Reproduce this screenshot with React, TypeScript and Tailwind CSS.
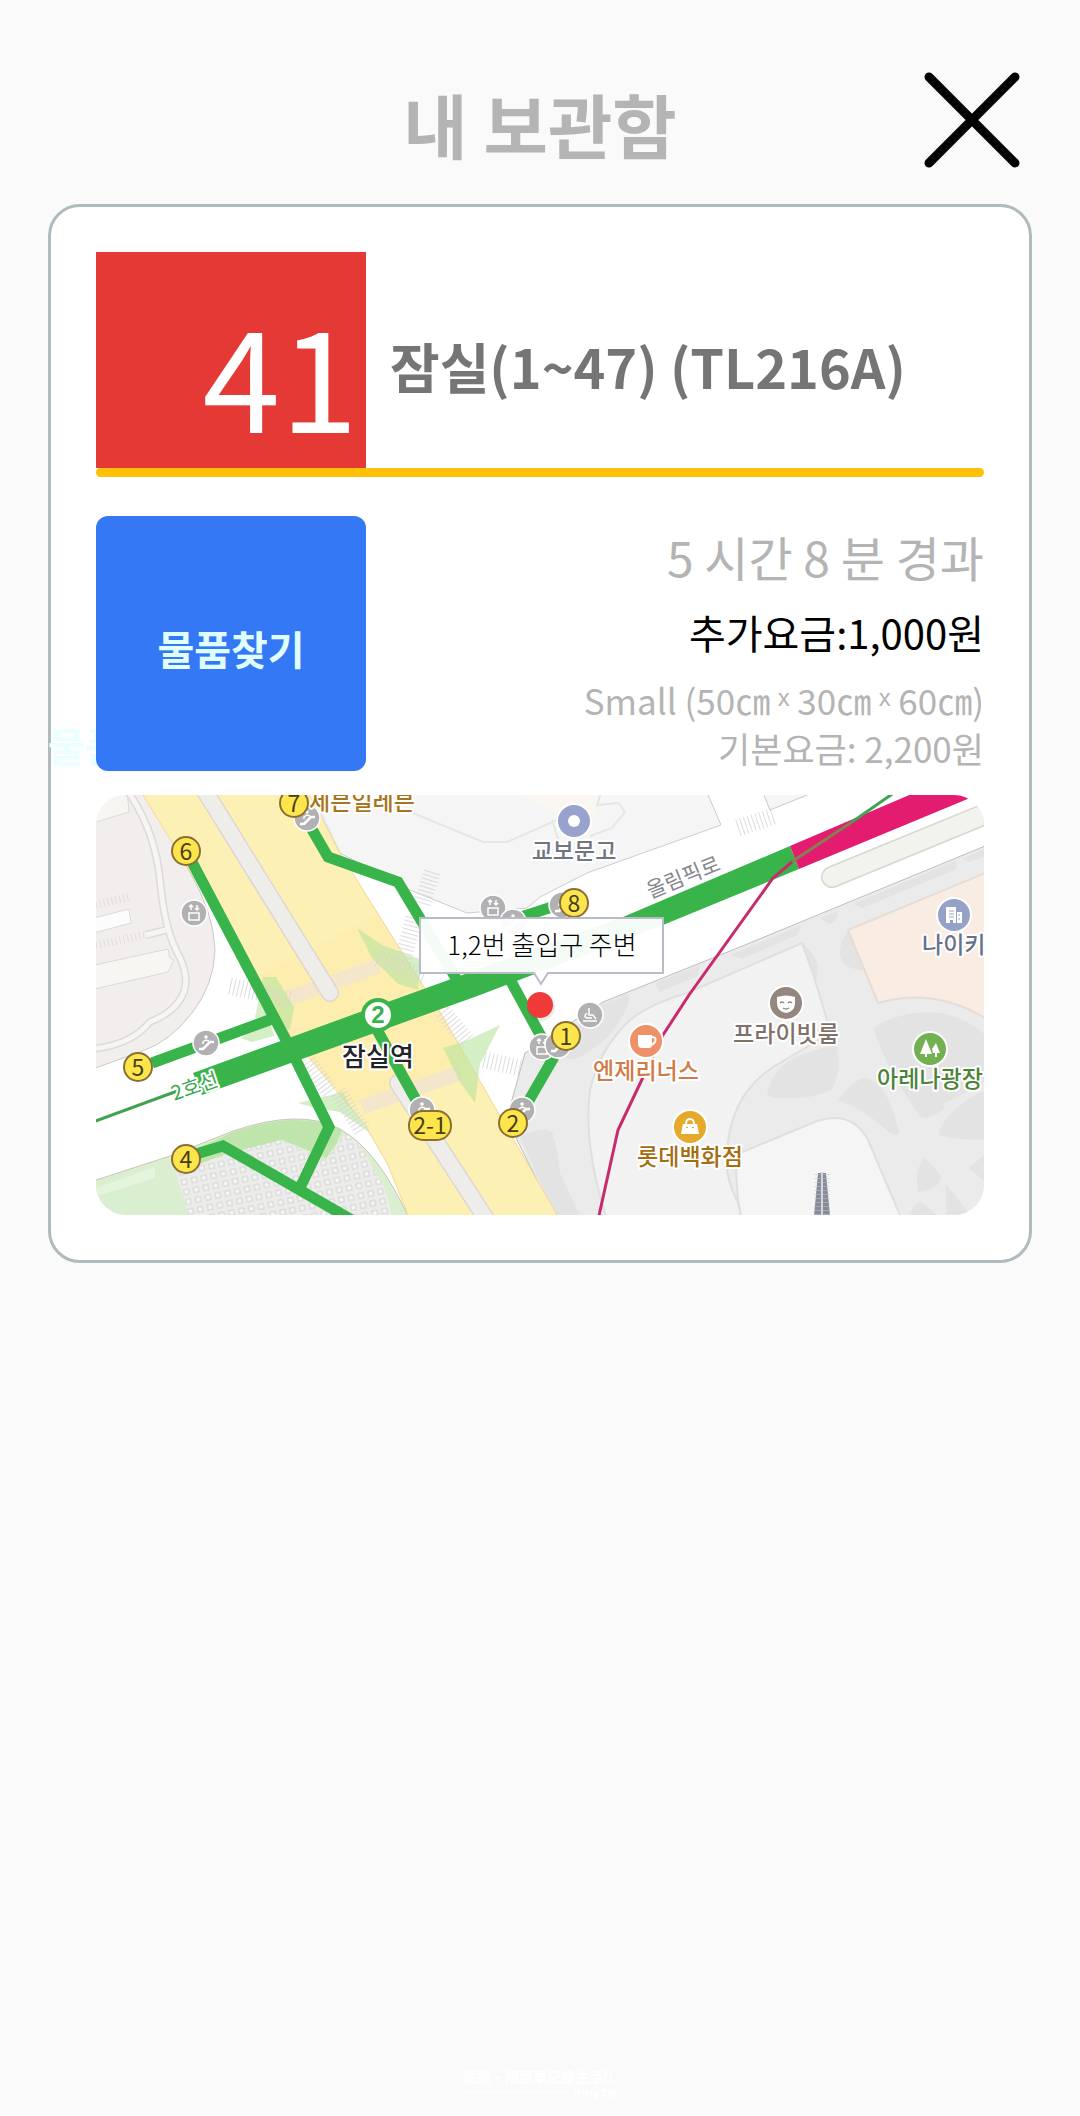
import type { ReactNode } from "react";

type Point = { x: number; y: number };

const exits: (Point & { label: string })[] = [
  { label: "7", x: 294, y: 803 },
  { label: "6", x: 186, y: 851 },
  { label: "5", x: 138, y: 1067 },
  { label: "4", x: 186, y: 1159 },
  { label: "8", x: 574, y: 903 },
  { label: "1", x: 566, y: 1036 },
  { label: "2", x: 513, y: 1123 },
];

const elevators: Point[] = [
  { x: 194, y: 913 },
  { x: 493, y: 908 },
  { x: 542, y: 1047 },
];

const escalators: Point[] = [
  { x: 206, y: 1043 },
  { x: 307, y: 818 },
  { x: 513, y: 922 },
  { x: 562, y: 905 },
  { x: 558, y: 1045 },
  { x: 422, y: 1110 },
  { x: 522, y: 1110 },
];

const crosswalks = [
  "M432 872 L422 905",
  "M414 918 L402 962",
  "M378 958 L424 976",
  "M230 986 L292 1000",
  "M443 1012 L468 1042",
  "M484 1060 L520 1068",
  "M308 1062 L330 1092",
  "M338 1092 L362 1130",
  "M738 828 L774 816",
];

function CloseIcon() {
  return (
    <svg viewBox="0 0 96 96" className="size-24" aria-hidden="true">
      <path
        d="M5 5 L91 91 M91 5 L5 91"
        stroke="black"
        strokeWidth="9"
        strokeLinecap="round"
      />
    </svg>
  );
}

function Place({
  x,
  y,
  color,
  children,
}: Point & { color: string; children: ReactNode }) {
  return (
    <g transform={`translate(${x} ${y})`}>
      <circle r="17" fill={color} stroke="white" strokeWidth="2" />
      {children}
    </g>
  );
}

function Terrain() {
  return (
    <g>
      {/* west block */}
      <g stroke="#dcd8d6">
        <path
          d="M90 790 H143 L187 867 Q214 912 215 950 Q214 985 192 1013 Q170 1042 140 1052 L90 1070 Z"
          fill="#f1eeed"
          stroke="#cbc7c5"
        />
        <path d="M90 790 H127 L129 812 L90 824 Z" fill="#f7f5f2" />
        <path d="M90 919 L129 909 L131 923 L90 934 Z" fill="#fcfcfc" />
        <path
          d="M90 966 L168 949 L170 958 L174 960 L168 972 L90 990 Z"
          fill="#f8f6f3"
        />
      </g>
      <path
        d="M127 790 Q155 830 160 880 Q164 925 176 950 Q190 975 184 992 Q176 1012 150 1022 Q130 1046 90 1049 M146 935 L170 929"
        fill="none"
        stroke="#dddad7"
        strokeWidth="8"
      />
      <path
        d="M127 790 Q155 830 160 880 Q164 925 176 950 Q190 975 184 992 Q176 1012 150 1022 Q130 1046 90 1049 M146 935 L170 929"
        fill="none"
        stroke="#f6f5f3"
        strokeWidth="5"
      />
      <path
        d="M96 905 L131 896 M96 945 L146 935"
        stroke="#e0dcda"
        strokeWidth="8"
        strokeDasharray="1 3"
      />

      {/* north blocks */}
      <path
        d="M310 790 L340 853 L410 890 L467 913 L527 908 L540 897 L587 873 L721 825 L706 790 Z"
        fill="#f6f6f6"
        stroke="#cccccc"
      />
      <path
        d="M518 795 H602 L592 815 L562 818 L540 804 Z"
        fill="#f9f7f0"
      />
      <path
        d="M310 790 L340 853 M413 813 L483 842 H507 L557 820 M552 820 L560 845 M602 790 L597 805 L619 803 L625 812 L612 828 L590 836"
        fill="none"
        stroke="#e6e6e6"
        strokeWidth="2"
      />
      <path d="M762 790 L770 810 L812 793 Z" fill="#f6f6f6" stroke="#c8c8c8" />
      <path
        d="M832 877 L1000 808"
        stroke="#d6d6d1"
        strokeWidth="22"
        strokeLinecap="round"
      />
      <path
        d="M832 877 L1000 808"
        stroke="#f3f3ee"
        strokeWidth="19"
        strokeLinecap="round"
      />

      {/* south-east block */}
      <path
        d="M990 844 L740 947 L603 1002 L560 1030 L525 1053 L510 1107 L517 1140 L557 1220 H990 Z"
        fill="#ebebec"
        stroke="#bdbdbd"
      />
      <g fill="#e3e3e4">
        <path d="M564 1048 Q562 1064 580 1057 Q608 1042 622 1017 Q632 1000 628 994 L603 1004 L574 1028 Z" />
        <path d="M520 1137 Q540 1126 551 1131 Q557 1140 560 1173 L582 1220 H557 Z" />
        <path d="M853 904 L955 861 Q960 870 950 872 L862 908 Z" />
        <path d="M962 859 L990 846 V854 L970 862 Z" />
        <path d="M655 983 L700 965 L698 976 L660 992 Z" />
        <path d="M730 955 L802 925 L797 935 L742 959 Z" />
        <path d="M820 918 L838 911 Q838 924 828 924 Z" />
        <path d="M848 930 Q835 950 843 963 Q850 970 864 970 Z" />
        <path d="M802 943 Q818 955 818 970 L815 985 Z" />
        <path d="M873 1028 Q900 1010 940 1013 Q970 1018 990 1040 V1084 L932 1116 Q922 1122 917 1112 Q888 1072 873 1028 Z" />
        <path d="M918 1192 Q914 1168 925 1158 L940 1174 Q944 1182 930 1190 Z" />
        <path d="M969 1168 L990 1150 V1186 Z" />
        <path d="M945 1183 L975 1220 H947 Z" />
        <path d="M908 1220 Q912 1204 921 1202 L944 1220 Z" />
      </g>
      <path
        d="M990 1084 L945 1108"
        stroke="#ebebec"
        strokeWidth="8"
      />
      <path
        d="M802 943 L687 993 Q640 1007 623 1027 Q598 1054 590 1090 Q583 1145 607 1220 H742 L738 1203 Q724 1175 727 1155 Q729 1096 773 1067 L827 1035 V1020 L814 977 Z"
        fill="#f2f2f3"
        stroke="#dfdfdf"
        strokeWidth="2"
      />
      <g fill="#e3e3e4">
        <path d="M767 1094 Q772 1066 803 1054 Q830 1045 837 1046 Q842 1075 831 1090 Q812 1100 773 1098 Z" />
        <path d="M838 1100 Q855 1078 866 1078 Q888 1082 899 1133 Q894 1138 884 1128 Q862 1108 838 1100 Z" />
        <path d="M938 1135 Q945 1108 990 1088 V1139 Q960 1141 938 1135 Z" />
      </g>
      <path
        d="M735 1155 L817 1121 Q852 1110 868 1140 L902 1220 H742 L738 1200 Z"
        fill="#f5f5f5"
        stroke="#dfdfdf"
        strokeWidth="2"
      />
      <path
        d="M848 930 L990 871 V1021 Q935 986 878 1003 Z"
        fill="#f9ede3"
        stroke="#e6dcd3"
        strokeWidth="2"
      />

      {/* park */}
      <path
        d="M90 1182 L170 1156 L233 1131 Q300 1108 340 1129 Q378 1150 410 1220 H90 Z"
        fill="#d9efd0"
        stroke="#c9c4bc"
      />
      <path
        d="M190 1152 L233 1132 Q300 1109 342 1130 L330 1160 L312 1152 L282 1140 L176 1172 Z"
        fill="#bfe5ac"
      />
      <path d="M90 1190 L155 1167 V1178 L90 1198 Z" fill="#e5f4dd" />
      <path
        d="M176 1173 L223 1155 L282 1140 L325 1160 L345 1133 L360 1145 L384 1187 L394 1220 H190 Z"
        fill="#ecedea"
      />
      <path
        d="M176 1173 L223 1155 L282 1140 L325 1160 L345 1133 L360 1145 L384 1187 L394 1220 H190 Z"
        fill="url(#tiles)"
      />

      {/* boulevard */}
      <path
        d="M140 790 L187 867 L257 977 L290 1035 L365 1125 L388 1165 L410 1220 H560 L443 1017 L390 933 L340 853 L307 790 Z"
        fill="#fdf0b5"
        stroke="#f3d795"
      />
      <path
        d="M257 977 L377 915 L470 1063 L350 1108 L290 1035 Z"
        fill="#fdebaa"
        opacity="0.5"
      />
      <path
        d="M290 998 L378 966 M362 1107 L460 1073"
        stroke="#f4e6cb"
        strokeWidth="15"
      />
      <path
        d="M203 788 L330 993 M398 1083 L490 1225"
        stroke="#ddd8d2"
        strokeWidth="18"
        strokeLinecap="round"
      />
      <path
        d="M203 788 L330 993 M398 1083 L490 1225"
        stroke="#efedea"
        strokeWidth="15"
        strokeLinecap="round"
      />
      <g fill="#b9e5a0" opacity="0.6">
        <path d="M357 928 L382 945 L422 960 L418 990 L398 984 L372 958 Z" />
        <path d="M500 1025 L480 1064 L475 1103 L460 1082 L443 1048 L468 1040 Z" />
        <path d="M263 977 L276 977 L294 1007 L290 1030 L255 1018 Z" />
        <path d="M240 1038 L270 1022 L274 1036 L252 1042 Z" />
        <path d="M298 1103 L343 1092 L350 1106 L370 1133 L340 1112 L315 1108 Z" />
      </g>
      <g stroke="#d4d4d7" strokeWidth="17" strokeDasharray="1 3" opacity="0.8">
        {crosswalks.map((d) => (
          <path key={d} d={d} />
        ))}
      </g>
    </g>
  );
}

function Rails() {
  return (
    <g fill="none">
      <path
        d="M193 1073 L360 1012 L623 917 L790 846 L799 869 L663 925 L480 995 L202 1095 Z"
        fill="#39b44a"
      />
      <path d="M790 846 L914 793 H982 L799 869 Z" fill="#e31c70" />
      <path d="M90 1123 L180 1090" stroke="#3fa451" strokeWidth="3" />
      <path d="M790 863 L852 822" stroke="#84804f" strokeWidth="3" />
      <path d="M852 822 L898 790" stroke="#3fa451" strokeWidth="3" />
      <path
        d="M792 862 L773 878 L689 995 L663 1035 L618 1130 L598 1220"
        stroke="#c72b6c"
        strokeWidth="3"
      />
      <g stroke="#39b44a" strokeWidth="11">
        <path d="M192 862 L286 1040 L329 1127 L299 1190" />
        <path d="M152 1063 L272 1019" />
        <path d="M196 1154 L223 1146 L352 1220" />
        <path d="M310 826 L328 857 L398 882 L460 985" />
        <path d="M515 919 L552 907" />
        <path d="M376 1028 L416 1100" />
        <path d="M508 976 L543 1040" />
        <path d="M554 1057 L528 1102" />
      </g>
    </g>
  );
}

function Facilities() {
  return (
    <g>
      {elevators.map(({ x, y }) => (
        <g
          key={`${x}-${y}`}
          transform={`translate(${x} ${y})`}
          fill="none"
          stroke="white"
          strokeWidth="1.5"
        >
          <circle r="13" fill="#b1b1b3" />
          <rect x="-5" y="0" width="10" height="7" />
          <path d="M-3 -3 V-8 M-5 -6 L-3 -8 L-1 -6 M3 -8 V-3 M1 -5 L3 -3 L5 -5" />
        </g>
      ))}
      {escalators.map(({ x, y }) => (
        <g
          key={`${x}-${y}`}
          transform={`translate(${x} ${y})`}
          fill="none"
          stroke="white"
          strokeWidth="1.5"
        >
          <circle r="13" fill="#b1b1b3" />
          <path d="M-7 6 H-3 L4 -1 H8" strokeWidth="2.5" />
          <circle cx="0" cy="-6" r="1" fill="white" />
          <path d="M-3 1 V-1 L0 -3 L3 -2" />
        </g>
      ))}
      <g
        transform="translate(590 1015)"
        fill="none"
        stroke="white"
        strokeWidth="1.5"
      >
        <circle r="13" fill="#b1b1b3" />
        <path d="M-7 6 H7 M-1 -7 V0 H3 L6 4 M-3 -2 Q-7 2 -3 3 H2" />
      </g>
    </g>
  );
}

function LockerMap() {
  return (
    <svg
      viewBox="96 795 888 420"
      className="block w-full rounded-[30px]"
      role="img"
      aria-label="잠실역 지도"
      fontFamily="'Noto Sans CJK KR', sans-serif"
    >
      <defs>
        <pattern
          id="tiles"
          width="10"
          height="10"
          patternUnits="userSpaceOnUse"
          patternTransform="rotate(-12)"
        >
          <rect
            x="2"
            y="2"
            width="5"
            height="5"
            fill="#f6f6f4"
            stroke="#d2d3d1"
          />
        </pattern>
      </defs>
      <rect x="96" y="795" width="888" height="420" fill="white" />
      <Terrain />
      <Rails />
      <Facilities />

      {/* Lotte tower */}
      <path d="M814 1216 L818 1173 H826 L830 1216 Z" fill="#858c98" />
      <path d="M822 1172 V1216" stroke="#d5d8dd" strokeWidth="2" />
      <path
        d="M822 1174 V1216"
        stroke="#c4c8cf"
        strokeWidth="16"
        strokeDasharray="1 3"
        opacity="0.5"
      />

      <g
        fontSize="23"
        fontWeight="500"
        textAnchor="middle"
        stroke="white"
        strokeWidth="4"
        strokeLinejoin="round"
        paintOrder="stroke"
      >
        <text x="362" y="810" fill="#a9751c">
          세븐일레븐
        </text>
        <text x="574" y="859" fill="#70757f">
          교보문고
        </text>
        <text x="646" y="1079" fill="#d27a45">
          엔제리너스
        </text>
        <text x="690" y="1165" fill="#a56c10">
          롯데백화점
        </text>
        <text x="786" y="1042" fill="#7f7169">
          프라이빗룸
        </text>
        <text x="922" y="953" fill="#67718a" textAnchor="start">
          나이키
        </text>
        <text x="930" y="1087" fill="#4b8436">
          아레나광장
        </text>
        <text
          transform="translate(686 884) rotate(-22)"
          fill="#85878c"
          fontSize="21"
          fontWeight="400"
        >
          올림픽로
        </text>
        <text
          transform="translate(197 1093) rotate(-19)"
          fill="#39a84c"
          fontSize="20"
          fontWeight="400"
        >
          2호선
        </text>
        <text x="378" y="1066" fill="#22222b" fontSize="26">
          잠실역
        </text>
      </g>

      <Place x={574} y={821} color="#97a3cc">
        <circle r="6" fill="white" />
      </Place>
      <Place x={646} y={1041} color="#ee9169">
        <path d="M-8 -6 H6 V4 Q6 7 3 7 H-4 Q-8 7 -8 3 Z" fill="white" />
        <path
          d="M6 -4 Q11 -4 9 1 L6 4"
          fill="none"
          stroke="white"
          strokeWidth="2"
        />
      </Place>
      <Place x={690} y={1127} color="#e5aa2c">
        <path d="M-7 -3 H7 L9 7 H-9 Z" fill="white" />
        <path
          d="M-4 -3 Q-4 -8 0 -8 Q4 -8 4 -3"
          fill="none"
          stroke="white"
          strokeWidth="2"
        />
        <path d="M-3 0 V1 M3 0 V1" stroke="#e5aa2c" strokeWidth="2" />
      </Place>
      <Place x={786} y={1003} color="#94877f">
        <path d="M-9 -6 Q0 -9 9 -6 V1 Q8 9 0 10 Q-8 9 -9 1 Z" fill="white" />
        <path
          d="M-6 0 Q-4 -2 -2 0 M2 0 Q4 -2 6 0 M-3 5 Q0 7 3 5"
          fill="none"
          stroke="#94877f"
          strokeWidth="1.5"
        />
      </Place>
      <Place x={954} y={915} color="#96a1c8">
        <path
          d="M-8 -8 H2 V8 H-1 V5 H-4 V8 H-8 Z M3 -3 H8 V8 H3 Z"
          fill="white"
        />
        <path
          d="M-5 -4 H0 M-5 -1 H0 M-5 2 H0 M4 0 H6 M4 4 H6"
          stroke="#96a1c8"
        />
      </Place>
      <Place x={930} y={1049} color="#72b052">
        <path
          d="M-4 -10 L2 5 H-3 V8 H-5 V5 H-10 Z M6 -6 L10 4 H7 V8 H5 V4 H3 L2 0 Z"
          fill="white"
        />
      </Place>

      {/* exits */}
      <g fontSize="23" textAnchor="middle" fill="#4a3c18">
        {exits.map(({ label, x, y }) => (
          <g key={label}>
            <circle
              cx={x}
              cy={y}
              r="14"
              fill="#fde64b"
              stroke="#8a6f35"
              strokeWidth="2"
            />
            <text x={x} y={y + 9}>
              {label}
            </text>
          </g>
        ))}
        <rect
          x="409"
          y="1111"
          width="42"
          height="29"
          rx="14"
          fill="#fde64b"
          stroke="#8a6f35"
          strokeWidth="2"
        />
        <text x="430" y="1134">
          2-1
        </text>
      </g>

      {/* station */}
      <circle
        cx="378"
        cy="1015"
        r="15"
        fill="white"
        stroke="#39b44a"
        strokeWidth="4"
      />
      <text
        x="378"
        y="1023"
        fontFamily="'Liberation Sans', sans-serif"
        fontSize="24"
        fontWeight="700"
        fill="#39b44a"
        textAnchor="middle"
      >
        2
      </text>

      {/* locker position */}
      <circle cx="541" cy="1007" r="14" fill="#000000" opacity="0.08" />
      <circle cx="540" cy="1005" r="13" fill="#f03a3a" />
      <path
        d="M420 918 H663 V973 H548 L541 984 L534 973 H420 Z"
        fill="white"
        fillOpacity="0.95"
        stroke="#b9bbc8"
        strokeWidth="2"
      />
      <text
        x="542"
        y="955"
        fontSize="26"
        fontWeight="300"
        textAnchor="middle"
        fill="black"
      >
        1,2번 출입구 주변
      </text>
    </svg>
  );
}

export default function App() {
  return (
    <div className="flex min-h-screen flex-col bg-[#fafafa] px-12 pt-[72px] font-['Noto_Sans_CJK_KR',sans-serif]">
      <header className="grid h-[132px] grid-cols-[96px_1fr_96px] items-start px-3">
        <h1 className="col-start-2 pt-1 text-center text-[70px] leading-24 font-bold text-[#b4b4b4]">
          내 보관함
        </h1>
        <button aria-label="닫기" className="cursor-pointer">
          <CloseIcon />
        </button>
      </header>

      <main className="relative isolate rounded-[32px] border-3 border-[#b0bbbd] bg-white p-[45px]">
        <section className="flex items-center gap-6">
          <div className="flex h-[216px] w-[270px] shrink-0 items-center justify-end bg-[#e53935] pt-6 pr-2 text-[140px] leading-none text-white">
            41
          </div>
          <h2 className="pt-3 text-[54px] leading-16 font-bold whitespace-nowrap text-[#757575]">
            잠실(1~47) (TL216A)
          </h2>
        </section>
        <div className="h-[9px] rounded-full bg-[#ffc107]" />

        <section className="mt-[39px] flex h-[255px] justify-between">
          <button className="w-[270px] cursor-pointer rounded-xl bg-[#3478f6] pt-2 text-[40px] leading-12 font-bold text-[#e0ffff]">
            물품찾기
          </button>
          <div className="flex flex-col items-end whitespace-nowrap text-[#b4b4b4]">
            <p className="pt-2 text-[48px] leading-16">5 시간 8 분 경과</p>
            <p className="pt-3 pb-3 text-[40px] leading-16 text-black">
              추가요금:1,000원
            </p>
            <p className="text-[35px] leading-12">
              Small (50㎝ ˣ 30㎝ ˣ 60㎝)
            </p>
            <p className="text-[35px] leading-12">기본요금: 2,200원</p>
          </div>
        </section>
        <span
          aria-hidden="true"
          className="absolute top-[514px] left-[-3px] -z-10 text-[40px] leading-12 font-bold text-[#ebffff]"
        >
          물품찾기
        </span>

        <div className="mt-6">
          <LockerMap />
        </div>
      </main>

      <footer className="mx-auto mt-auto mb-4 w-[154px] font-['Noto_Sans_CJK_TC',sans-serif] text-[14px] leading-4 font-bold whitespace-nowrap text-white">
        <p>妮妮・用類單記錄生活!!</p>
        <div className="flex items-center gap-1">
          <span className="h-px flex-1 bg-white" />
          <span className="text-[12px]">niny.tw</span>
        </div>
      </footer>
    </div>
  );
}
